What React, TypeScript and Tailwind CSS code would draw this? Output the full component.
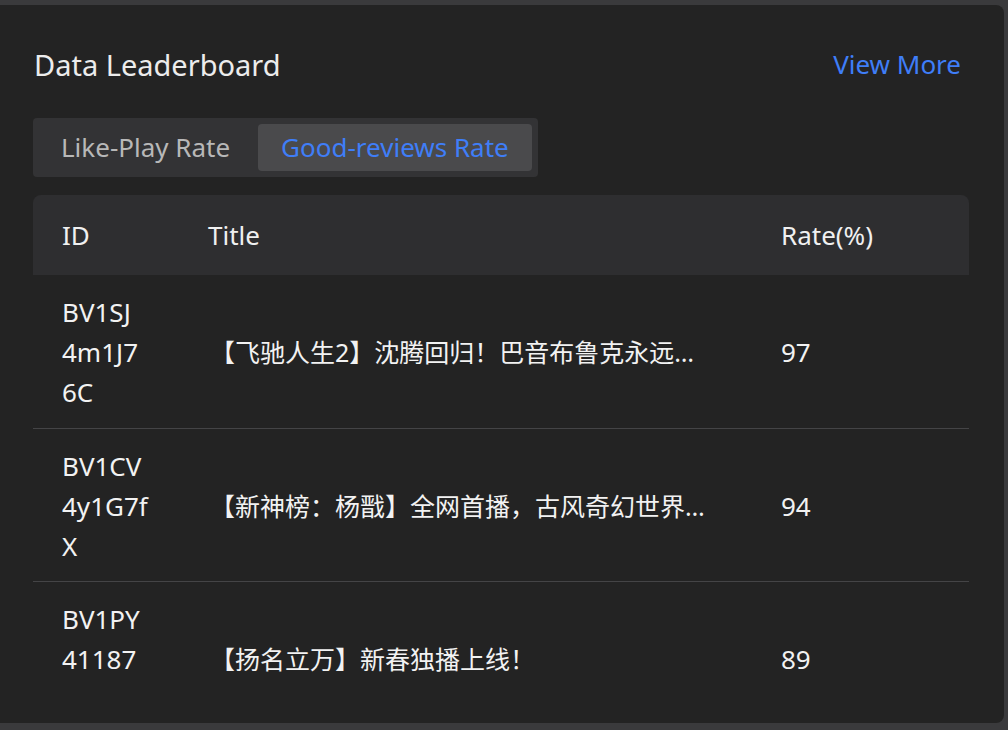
import React from "react";

type Row = {
    id: string[];
    title: string;
    rate: number;
};

const rows: Row[] = [
    { id: ["BV1SJ", "4m1J7", "6C"], title: "【飞驰人生2】沈腾回归！巴音布鲁克永远的车神再度出发", rate: 97 },
    { id: ["BV1CV", "4y1G7f", "X"], title: "【新神榜：杨戬】全网首播，古风奇幻世界震撼开启", rate: 94 },
    { id: ["BV1PY", "41187", "7w"], title: "【扬名立万】新春独播上线！", rate: 89 },
];

const App = () => {
    return (
        <div className="min-h-screen bg-[#3a3a3c] pt-[5px] pb-[7px] pr-[4px] font-['Noto_Sans','Noto_Sans_CJK_SC',sans-serif]">
            {/* Card */}
            <div className="bg-[#232323] rounded-r-lg pt-[34px] pb-[34px] pl-[34px] pr-[35px]">
                {/* Header */}
                <div className="h-[50px] flex items-center justify-between">
                    <h2 className="text-[29px] text-[#ececec] leading-none">Data Leaderboard</h2>
                    <a className="text-[26px] text-[#3f7ef8] leading-none mr-[8px] cursor-pointer">View More</a>
                </div>

                {/* Tabs */}
                <div className="mt-[29px] h-[59px] w-fit flex items-center gap-[6px] p-[6px] bg-[#333335] rounded-[4px] -ml-px">
                    <div className="h-[47px] px-[22px] flex items-center text-[26px] text-[#b8b8b8] rounded-[4px]">
                        Like-Play Rate
                    </div>
                    <div className="h-[47px] px-[23px] flex items-center text-[26px] text-[#3f7ef8] bg-[#4a4a4c] rounded-[4px]">
                        Good-reviews Rate
                    </div>
                </div>

                {/* Table */}
                <div className="mt-[18px] h-[494px] overflow-hidden -ml-px">
                    <div className="grid grid-cols-[146px_573px_1fr] h-[80px] items-center bg-[#2e2e30] rounded-t-lg text-[26px] text-[#f0f0f0]">
                        <div className="pl-[29px]">ID</div>
                        <div className="pl-[29px]">Title</div>
                        <div className="pl-[29px]">Rate(%)</div>
                    </div>
                    {rows.map((r) => (
                        <div
                            key={r.id.join("")}
                            className="grid grid-cols-[146px_573px_1fr] items-center pt-[17px] pb-[15.5px] border-b border-[#444446] text-[#f2f2f2]"
                        >
                            <div className="pl-[29px] text-[26px] leading-[40px]">
                                {r.id.map((part) => (
                                    <div key={part}>{part}</div>
                                ))}
                            </div>
                            <div className="pl-[31px] pr-[37px] text-[25px] leading-[40px] truncate">{r.title}</div>
                            <div className="pl-[29px] text-[26px] leading-[40px]">{r.rate}</div>
                        </div>
                    ))}
                </div>
            </div>
        </div>
    );
};

export default App;
